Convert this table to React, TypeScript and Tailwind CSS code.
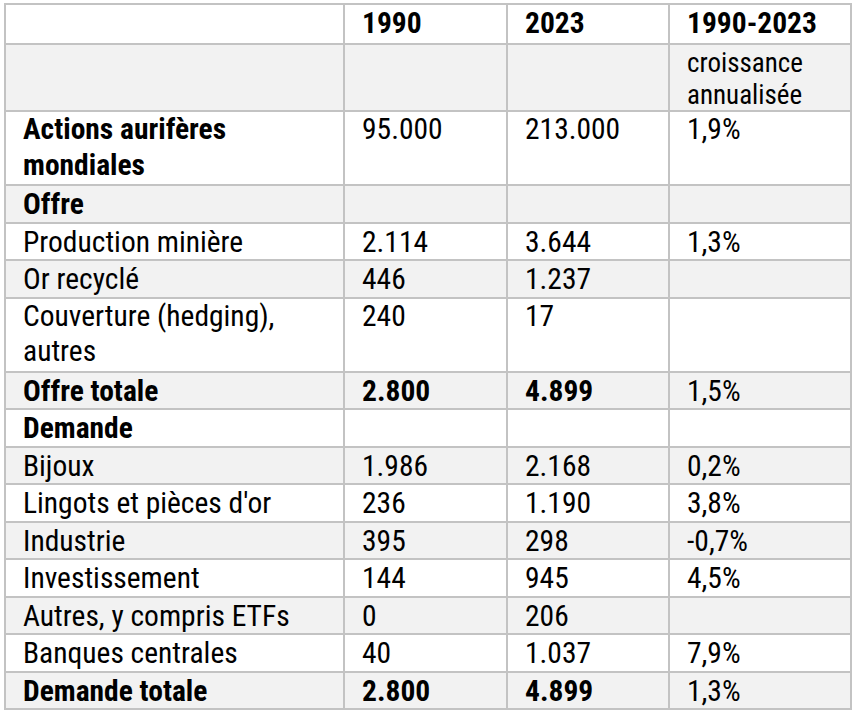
const rows: { label: string[]; a: string; b: string; c: string; bold?: boolean; boldNums?: boolean; tall?: boolean }[] = [
  { label: ['Actions aurifères', 'mondiales'], a: '95.000', b: '213.000', c: '1,9%', bold: true, tall: true },
  { label: ['Offre'], a: '', b: '', c: '', bold: true },
  { label: ['Production minière'], a: '2.114', b: '3.644', c: '1,3%' },
  { label: ['Or recyclé'], a: '446', b: '1.237', c: '' },
  { label: ['Couverture (hedging),', 'autres'], a: '240', b: '17', c: '', tall: true },
  { label: ['Offre totale'], a: '2.800', b: '4.899', c: '1,5%', bold: true, boldNums: true },
  { label: ['Demande'], a: '', b: '', c: '', bold: true },
  { label: ['Bijoux'], a: '1.986', b: '2.168', c: '0,2%' },
  { label: ["Lingots et pièces d'or"], a: '236', b: '1.190', c: '3,8%' },
  { label: ['Industrie'], a: '395', b: '298', c: '-0,7%' },
  { label: ['Investissement'], a: '144', b: '945', c: '4,5%' },
  { label: ['Autres, y compris ETFs'], a: '0', b: '206', c: '' },
  { label: ['Banques centrales'], a: '40', b: '1.037', c: '7,9%' },
  { label: ['Demande totale'], a: '2.800', b: '4.899', c: '1,3%', bold: true, boldNums: true },
];

export default function App() {
  return (
    <div
      className="min-h-screen bg-white pt-[3px] pl-[4px] text-black"
      style={{ fontFamily: '"Roboto Condensed", Roboto, sans-serif' }}
    >
      <div className="grid w-fit grid-cols-[337px_161px_160px_180px] gap-[2px] border-2 border-[#c3c3c3] bg-[#c3c3c3] text-[29.5px] leading-[35.5px]">
        {/* header */}
        <div className="h-[38px] bg-white" />
        <div className="h-[38px] bg-white pl-[17px] font-bold leading-[36px]">1990</div>
        <div className="h-[38px] bg-white pl-[17px] font-bold leading-[36px]">2023</div>
        <div className="h-[38px] bg-white pl-[17px] font-bold leading-[36px]">1990-2023</div>

        {/* sub-header */}
        <div className="h-[65px] bg-[#f2f2f2]" />
        <div className="h-[65px] bg-[#f2f2f2]" />
        <div className="h-[65px] bg-[#f2f2f2]" />
        <div className="h-[65px] bg-[#f2f2f2] pl-[17px] pt-[2px] text-[27px] leading-[32px]">
          croissance
          <br />
          annualisée
        </div>

        {rows.map((r, i) => {
          const bg = i % 2 === 0 ? 'bg-white' : 'bg-[#f2f2f2]';
          const h = r.tall ? 'h-[72px]' : 'h-[35.5px] pt-[1px]';
          const wt = r.bold ? 'font-bold' : 'font-normal';
          const nwt = r.boldNums ? 'font-bold' : 'font-normal';
          return (
            <div key={i} className="contents">
              <div className={`${bg} ${h} pl-[17px] ${wt}`}>
                {r.label.map((l, j) => (
                  <div key={j}>{l}</div>
                ))}
              </div>
              <div className={`${bg} ${h} pl-[17px] ${nwt}`}>{r.a}</div>
              <div className={`${bg} ${h} pl-[17px] ${nwt}`}>{r.b}</div>
              <div className={`${bg} ${h} pl-[17px] font-normal`}>{r.c}</div>
            </div>
          );
        })}
      </div>
    </div>
  );
}
